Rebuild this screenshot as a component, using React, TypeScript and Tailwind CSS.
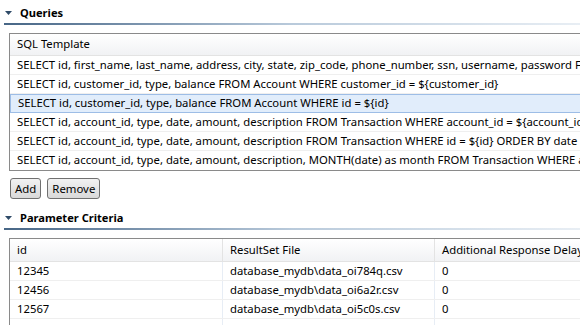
import React from 'react';

const queries = [
  'SELECT id, first_name, last_name, address, city, state, zip_code, phone_number, ssn, username, password FROM Customer',
  'SELECT id, customer_id, type, balance FROM Account WHERE customer_id = ${customer_id}',
  'SELECT id, customer_id, type, balance FROM Account WHERE id = ${id}',
  'SELECT id, account_id, type, date, amount, description FROM Transaction WHERE account_id = ${account_id}',
  'SELECT id, account_id, type, date, amount, description FROM Transaction WHERE id = ${id} ORDER BY date',
  'SELECT id, account_id, type, date, amount, description, MONTH(date) as month FROM Transaction WHERE account_id = ${account_id}',
];

const params = [
  { id: '12345', file: 'database_mydb\\data_oi784q.csv', delay: '0' },
  { id: '12456', file: 'database_mydb\\data_oi6a2r.csv', delay: '0' },
  { id: '12567', file: 'database_mydb\\data_oi5c0s.csv', delay: '0' },
];

function SectionHeader({ title }: { title: string }) {
  return (
    <div>
      <div className="flex h-[23px] items-center pt-[3px]">
        <svg width="20" height="12" viewBox="0 0 20 12" className="shrink-0">
          <path d="M5 4 L12 4 L8.5 8 Z" fill="#2f4b68" />
        </svg>
        <span className="font-bold text-[11.1px]">{title}</span>
      </div>
      <div className="ml-[4px] h-[2px] bg-gradient-to-r from-[#476686] via-[#b9cadb] to-[#e8eef4]" />
    </div>
  );
}

function Button({ label }: { label: string }) {
  return (
    <button className="h-[21px] rounded-[3px] border border-[#707070] bg-gradient-to-b from-[#f2f2f2] to-[#d9d9d9] px-[4px] text-[11.4px] leading-none">
      {label}
    </button>
  );
}

export default function App() {
  return (
    <div
      className="h-[325px] w-[580px] overflow-hidden bg-white text-[11.3px] text-black"
      style={{ fontFamily: '"Noto Sans", sans-serif' }}
    >
      <SectionHeader title="Queries" />

      <div className="ml-[9px] mt-[8px] w-[700px] border-y border-l border-[#8a8a8a]">
        <div className="flex h-[22px] items-center border-b border-[#e3e3e3] bg-gradient-to-b from-[#ffffff] to-[#f1f2f4] pl-[7px]">
          SQL Template
        </div>
        {queries.map((q, i) => (
          <div
            key={i}
            className={`flex h-[19px] items-center whitespace-nowrap pl-[7px] ${
              i === 2
                ? 'border border-[#9dbde6] bg-[#e1edfb] pl-[6px]'
                : i === queries.length - 1
                  ? ''
                  : 'border-b border-[#efefef]'
            }`}
          >
            {q}
          </div>
        ))}
      </div>

      <div className="ml-[10px] mt-[7px] flex gap-[6px]">
        <Button label="Add" />
        <Button label="Remove" />
      </div>

      <div className="mt-[6px]">
        <SectionHeader title="Parameter Criteria" />
      </div>

      <div className="ml-[9px] mt-[8px] w-[700px] border-t border-l border-[#8a8a8a]">
        <div className="flex h-[23px] border-b border-[#e3e3e3] bg-gradient-to-b from-[#ffffff] to-[#f1f2f4]">
          <div className="flex w-[213px] items-center border-r border-[#e3e3e3] pl-[7px]">id</div>
          <div className="flex w-[212px] items-center border-r border-[#e3e3e3] pl-[7px]">ResultSet File</div>
          <div className="flex flex-1 items-center pl-[7px]">Additional Response Delay</div>
        </div>
        {params.map((p) => (
          <div key={p.id} className="flex h-[19px] border-b border-[#efefef]">
            <div className="flex w-[213px] items-center border-r border-[#e7edf5] pl-[7px]">{p.id}</div>
            <div className="flex w-[212px] items-center border-r border-[#e7edf5] pl-[7px]">{p.file}</div>
            <div className="flex flex-1 items-center pl-[7px]">{p.delay}</div>
          </div>
        ))}
        <div className="flex h-[19px]">
          <div className="w-[213px] border-r border-[#e7edf5]" />
          <div className="w-[212px] border-r border-[#e7edf5]" />
          <div className="flex-1" />
        </div>
      </div>
    </div>
  );
}
